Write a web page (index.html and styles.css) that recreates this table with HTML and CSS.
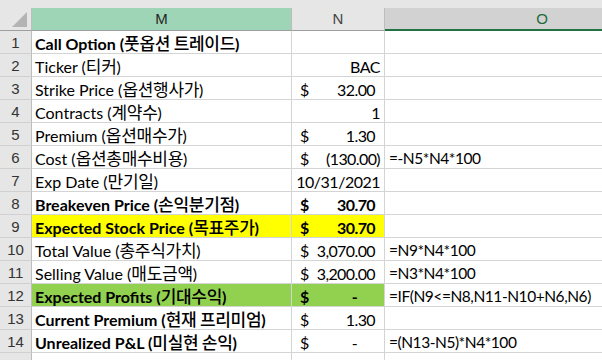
FILE: index.html
```html
<!DOCTYPE html>
<html>
<head>
<meta charset="utf-8">
<link rel="stylesheet" href="styles.css">
</head>
<body>
<div class="sheet">
  <div class="topstrip"></div>
  <div class="grid">
    <div class="corner"><span class="tri"></span></div>
    <div class="colhead sel">M</div>
    <div class="colhead">N</div>
    <div class="colhead active">O</div>

    <div class="rh">1</div><div class="c b">Call Option (<span class="k">풋옵션 트레이드</span>)</div><div class="c"></div><div class="c"></div>
    <div class="rh">2</div><div class="c">Ticker (<span class="k">티커</span>)</div><div class="c r">BAC</div><div class="c"></div>
    <div class="rh">3</div><div class="c">Strike Price (<span class="k">옵션행사가</span>)</div><div class="c acc"><span>$</span><span class="v">32.00</span></div><div class="c"></div>
    <div class="rh">4</div><div class="c">Contracts (<span class="k">계약수</span>)</div><div class="c r">1</div><div class="c"></div>
    <div class="rh">5</div><div class="c">Premium (<span class="k">옵션매수가</span>)</div><div class="c acc"><span>$</span><span class="v">1.30</span></div><div class="c"></div>
    <div class="rh">6</div><div class="c">Cost (<span class="k">옵션총매수비용</span>)</div><div class="c acc"><span>$</span><span class="v neg">(130.00)</span></div><div class="c f">=-N5*N4*100</div>
    <div class="rh">7</div><div class="c">Exp Date (<span class="k">만기일</span>)</div><div class="c r date">10/31/2021</div><div class="c"></div>
    <div class="rh">8</div><div class="c b">Breakeven Price (<span class="k">손익분기점</span>)</div><div class="c acc b"><span>$</span><span class="v">30.70</span></div><div class="c"></div>
    <div class="rh">9</div><div class="c b yel">Expected Stock Price (<span class="k">목표주가</span>)</div><div class="c acc b yel"><span>$</span><span class="v">30.70</span></div><div class="c"></div>
    <div class="rh">10</div><div class="c">Total Value (<span class="k">총주식가치</span>)</div><div class="c acc"><span>$</span><span class="v">3,070.00</span></div><div class="c f">=N9*N4*100</div>
    <div class="rh">11</div><div class="c">Selling Value (<span class="k">매도금액</span>)</div><div class="c acc"><span>$</span><span class="v">3,200.00</span></div><div class="c f">=N3*N4*100</div>
    <div class="rh">12</div><div class="c b grn">Expected Profits (<span class="k">기대수익</span>)</div><div class="c acc b grn"><span>$</span><span class="v dash">-</span></div><div class="c f">=IF(N9&lt;=N8,N11-N10+N6,N6)</div>
    <div class="rh">13</div><div class="c b">Current Premium (<span class="k">현재 프리미엄</span>)</div><div class="c acc"><span>$</span><span class="v">1.30</span></div><div class="c"></div>
    <div class="rh">14</div><div class="c b">Unrealized P&amp;L (<span class="k">미실현 손익</span>)</div><div class="c acc"><span>$</span><span class="v dash">-</span></div><div class="c f">=(N13-N5)*N4*100</div>
    <div class="rh">15</div><div class="c"></div><div class="c"></div><div class="c"></div>
  </div>
</div>
</body>
</html>
```
FILE: styles.css
```css
html, body {
  margin: 0;
  padding: 0;
  background: #ffffff;
}
.sheet {
  width: 602px;
  height: 360px;
  overflow: hidden;
  font-family: "Lato", "Noto Sans CJK KR", sans-serif;
  font-size: 16px;
  color: #000;
}
.topstrip {
  height: 8px;
  background: #e6e6e6;
}
.grid {
  display: grid;
  grid-template-columns: 32px 260px 93px 315px;
  grid-auto-rows: 23px;
}
.grid > div {
  box-sizing: border-box;
  border-right: 1px solid #d4d4d4;
  border-bottom: 1px solid #d4d4d4;
  white-space: nowrap;
  line-height: 23px;
  overflow: visible;
}
.k {
  display: inline-block;
  line-height: 17px;
  font-family: "Noto Sans CJK KR", sans-serif;
  font-size: 17px;
  font-weight: normal;
  letter-spacing: -0.3px;
}
.b .k {
  font-weight: 500;
}
.corner {
  background: #e6e6e6;
  position: relative;
  height: 23px;
}
.grid > .corner,
.grid > .colhead {
  border-bottom: 1px solid #9e9e9e;
  border-right: 1px solid #bdbdbd;
}
.tri {
  position: absolute;
  right: 4px;
  bottom: 3px;
  width: 0;
  height: 0;
  border-left: 15px solid transparent;
  border-bottom: 15px solid #b4b4b4;
}
.colhead {
  background: #e6e6e6;
  text-align: center;
  color: #444;
  font-family: "Liberation Sans", sans-serif;
  font-size: 15px;
  line-height: 22px !important;
}
.colhead.sel {
  background: #9fd5b7;
  color: #262626;
}
.grid > .colhead.active {
  background: #d2d2d2;
  color: #1e6b41;
  border-bottom: 2px solid #217346;
}
.rh {
  background: #e6e6e6;
  text-align: center;
  color: #333;
  font-family: "Liberation Sans", sans-serif;
  font-size: 15px;
}
.grid > .rh {
  border-right: 1px solid #bdbdbd;
  border-bottom: 1px solid #d0d0d0;
}
.c {
  padding: 1px 3px 0 3px;
}
.b {
  font-weight: bold;
}
.r {
  text-align: right;
  padding-right: 4px;
  letter-spacing: -0.5px;
}
.date {
  padding-left: 0;
  padding-right: 4px;
}
.acc {
  display: flex;
  justify-content: space-between;
  padding-left: 8px;
  padding-right: 9px;
}
.acc .v {
  letter-spacing: -0.6px;
}
.acc .neg {
  margin-right: -5px;
}
.acc .dash {
  margin-right: 18px;
}
.f {
  padding-left: 4px;
  font-size: 15.5px;
  letter-spacing: -0.45px;
}
.yel {
  background: #ffff00;
}
.grn {
  background: #92d050;
}
```
